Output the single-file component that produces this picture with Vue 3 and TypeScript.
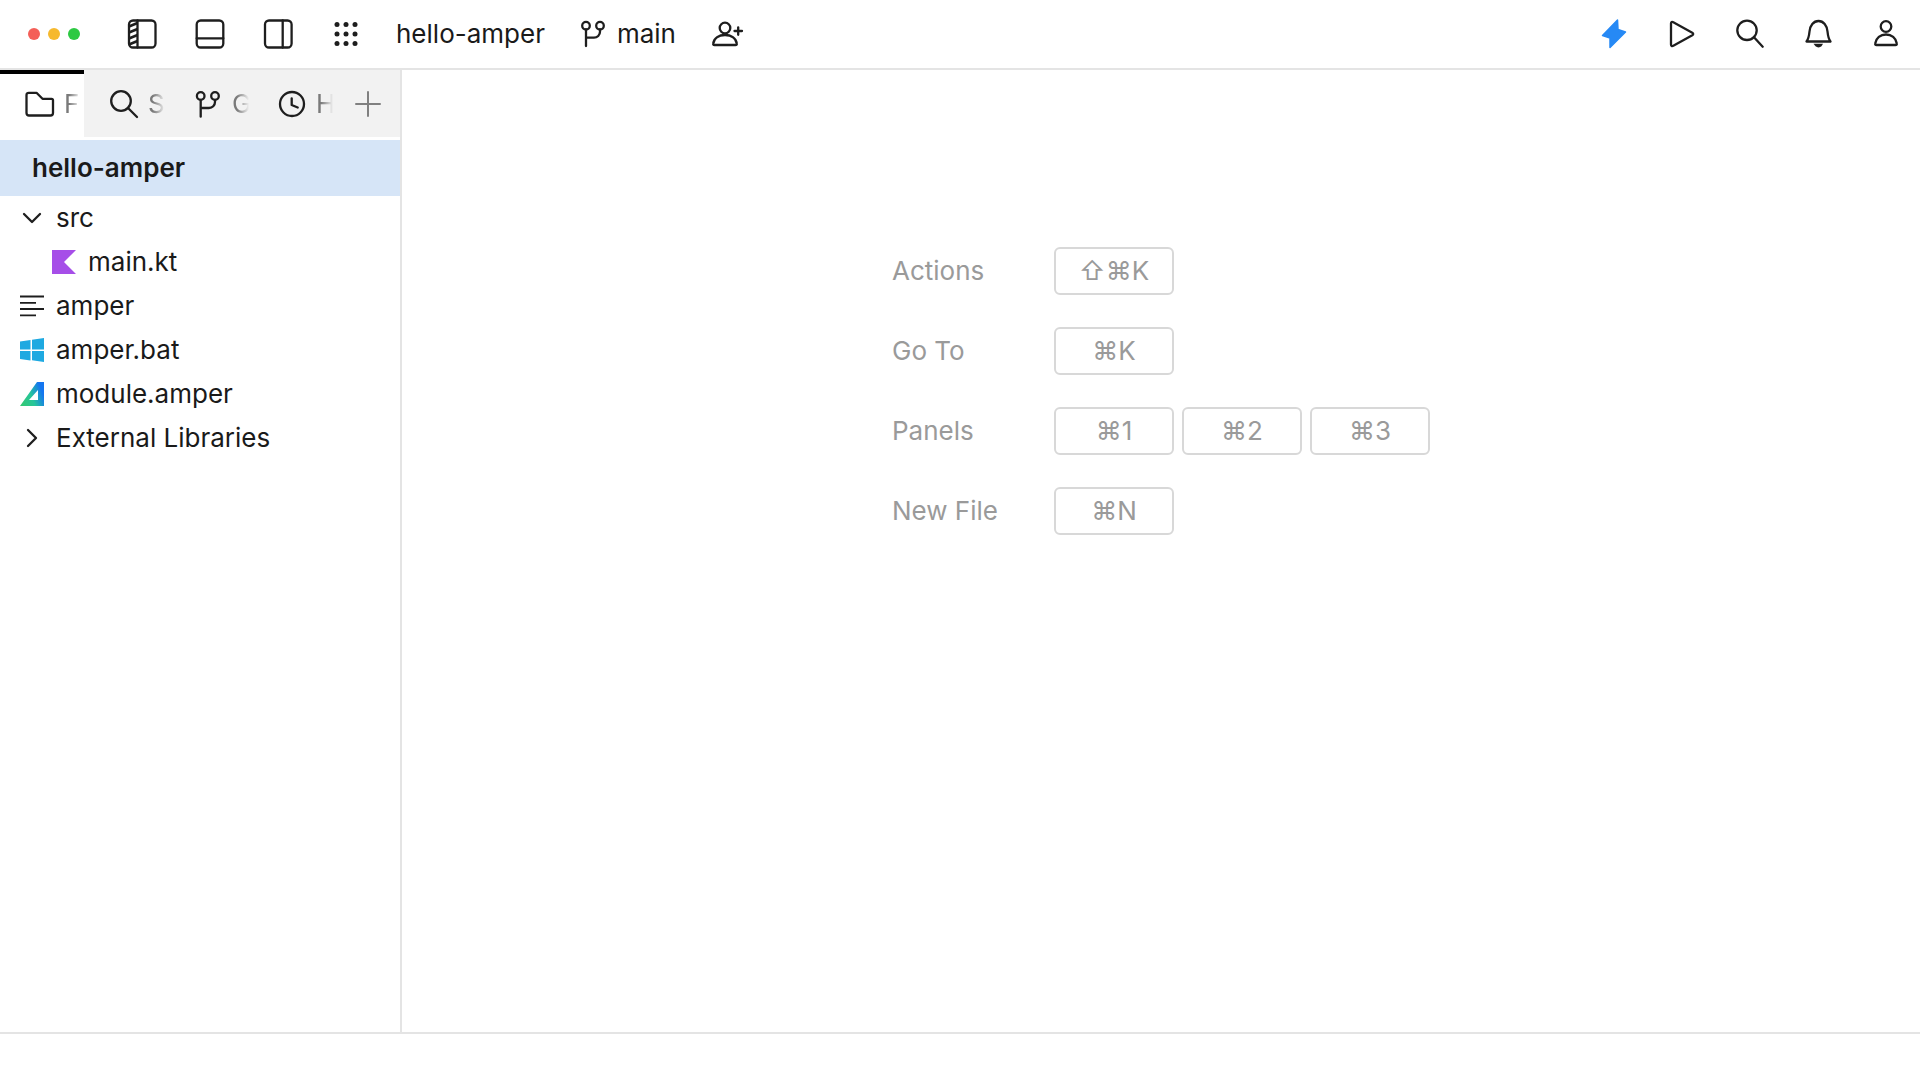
<script setup lang="ts">
const shortcuts: { label: string; keys: string[] }[] = [
  { label: 'Actions', keys: ['⇧⌘K'] },
  { label: 'Go To', keys: ['⌘K'] },
  { label: 'Panels', keys: ['⌘1', '⌘2', '⌘3'] },
  { label: 'New File', keys: ['⌘N'] },
]
</script>

<template>
  <div class="app">
    <header class="topbar">
      <div class="lights">
        <span class="light red"></span><span class="light yellow"></span><span class="light green"></span>
      </div>
      <div class="slot">
        <svg class="ic" viewBox="0 0 34 34"><rect x="4" y="3.500" width="26.500" height="27" rx="4"/><path d="M12.500 3.500v27"/><path class="hatch" d="M4 9.500l8.500-3.500M4 15.500l8.500-3.500M4 21.500l8.500-3.500M4 27.500l8.500-3.500"/></svg>
      </div>
      <div class="slot">
        <svg class="ic" viewBox="0 0 34 34"><rect x="3.700" y="3.500" width="26.600" height="27" rx="4"/><path d="M3.700 21.300h26.600"/></svg>
      </div>
      <div class="slot">
        <svg class="ic" viewBox="0 0 34 34"><rect x="4" y="3.500" width="26.600" height="27" rx="4"/><path d="M21.700 3.500v27"/></svg>
      </div>
      <div class="slot">
        <svg class="ic" viewBox="0 0 34 34"><g class="dots"><circle cx="8" cy="7.500" r="2.500"/><circle cx="17" cy="7.500" r="2.500"/><circle cx="26" cy="7.500" r="2.500"/><circle cx="8" cy="17" r="2.500"/><circle cx="17" cy="17" r="2.500"/><circle cx="26" cy="17" r="2.500"/><circle cx="8" cy="26.500" r="2.500"/><circle cx="17" cy="26.500" r="2.500"/><circle cx="26" cy="26.500" r="2.500"/></g></svg>
      </div>
      <span class="project">hello-amper</span>
      <svg class="ic branch" viewBox="0 0 34 34"><circle cx="10" cy="8.700" r="3.800"/><circle cx="24" cy="8.700" r="3.800"/><path d="M10 12.500V29M24 12.500v2.200a6 6 0 0 1-6 6h-8"/></svg>
      <span class="branch-name">main</span>
      <svg class="ic adduser" viewBox="0 0 34 34"><circle cx="15" cy="11" r="5.300"/><path d="M4.500 28c-1 0-1.500-.5-1.300-1.500C4 21 9 18 15 18s11 3 11.800 8.500c.2 1-.3 1.500-1.300 1.500zM24.500 14h7.500M28.200 10.300v7.500"/></svg>
      <div class="spacer"></div>
      <div class="slot">
        <svg class="ic" viewBox="0 0 34 34"><path class="bolt" d="M20.500 3 5.500 18.500l7.500 2.500v9.500L28.500 15l-7.500-2.500z"/></svg>
      </div>
      <div class="slot">
        <svg class="ic" viewBox="0 0 34 34"><path d="M6 6.500c0-1.500 1-2 2.300-1.300l19 10.500c1.200.7 1.200 1.900 0 2.600l-19 10.500C7 29.500 6 29 6 27.500z"/></svg>
      </div>
      <div class="slot">
        <svg class="ic" viewBox="0 0 34 34"><circle cx="14" cy="13.300" r="9.700"/><path d="m21 20.300 8.700 9.400"/></svg>
      </div>
      <div class="slot">
        <svg class="ic" viewBox="0 0 34 34"><path d="M5.500 24.500c2-2.500 2.500-5 3-10 .5-6 4-10.500 9-10.500s8.500 4.500 9 10.500c.5 5 1 7.500 3 10z"/><path class="bolt-dark" d="M12.500 26.800h9.500l-1.500 2.500c-1.500 1.500-4.500 1.500-6 0z"/></svg>
      </div>
      <div class="slot">
        <svg class="ic" viewBox="0 0 34 34"><circle cx="17" cy="9.500" r="5.300"/><path d="M7.500 28c-1 0-1.500-.5-1.300-1.500C7 21 11.500 17.500 17 17.500S27 21 27.800 26.500c.2 1-.3 1.500-1.300 1.500z"/></svg>
      </div>
    </header>

    <div class="body">
      <aside class="sidebar">
        <nav class="tabs">
          <div class="tab active">
            <svg class="ic tabic" viewBox="0 0 30 30"><path d="M1.500 6c0-1.500 1-2.200 2.200-2.200h7.800l6 6h9c1 0 1.500.5 1.500 1.500V24c0 1.500-1 2.500-2.500 2.500H4c-1.500 0-2.500-1-2.500-2.500z"/></svg>
            <span class="tablabel">Files</span>
          </div>
          <div class="tab">
            <svg class="ic tabic" viewBox="0 0 30 30"><circle cx="12" cy="12" r="9.800"/><path d="m19 19 9 9"/></svg>
            <span class="tablabel">Search</span>
          </div>
          <div class="tab">
            <svg class="ic tabic" viewBox="0 0 30 30"><circle cx="7.700" cy="7" r="3.800"/><circle cx="22" cy="7" r="3.800"/><path d="M7.700 10.800v16.900M22 10.800v2.200a6 6 0 0 1-6 6H7.700"/></svg>
            <span class="tablabel">Git</span>
          </div>
          <div class="tab">
            <svg class="ic tabic" viewBox="0 0 30 30"><circle cx="15" cy="15" r="12"/><path d="M14.700 9.300V16l6 2.500"/></svg>
            <span class="tablabel">History</span>
          </div>
          <div class="tab plus">
            <svg class="ic plusic" viewBox="0 0 26 26"><path d="M13 1v24M1 13h24"/></svg>
          </div>
        </nav>
        <div class="selected">hello-amper</div>
        <ul class="tree">
          <li class="row">
            <svg class="ic ric" viewBox="0 0 24 24"><path d="m4 8 8 8 8-8"/></svg>
            <span class="rowtext">src</span>
          </li>
          <li class="row nested">
            <svg class="ric" viewBox="0 0 24 24"><path class="kt" d="M0 0h24L12 12l12 12H0z"/></svg>
            <span class="rowtext">main.kt</span>
          </li>
          <li class="row">
            <svg class="ric" viewBox="0 0 24 24"><path class="lines" d="M0 2.500h24M0 8.800h16M0 15h24M0 21.300h16"/></svg>
            <span class="rowtext">amper</span>
          </li>
          <li class="row">
            <svg class="ric" viewBox="0 0 24 24"><path class="win" d="m0 3.500 10.500-1.500v9.500H0zM12 1.800 24 0v11.500H12zM0 13h10.500v9.500L0 21zM12 13h12v11l-12-1.700z"/></svg>
            <span class="rowtext">amper.bat</span>
          </li>
          <li class="row">
            <svg class="ric" viewBox="0 0 24 24">
              <defs>
                <linearGradient id="amp" x1="0" y1="1" x2="1" y2="0.600">
                  <stop offset="0" stop-color="#34c96e"/>
                  <stop offset="0.55" stop-color="#27c59a"/>
                  <stop offset="1" stop-color="#1476f0"/>
                </linearGradient>
              </defs>
              <path fill="url(#amp)" fill-rule="evenodd" d="M17 0h7v24H0zM18 8 9 18h9z"/>
            </svg>
            <span class="rowtext">module.amper</span>
          </li>
          <li class="row">
            <svg class="ic ric" viewBox="0 0 24 24"><path d="m8 4 8 8-8 8"/></svg>
            <span class="rowtext">External Libraries</span>
          </li>
        </ul>
      </aside>
      <main class="main">
        <div v-for="s in shortcuts" :key="s.label" class="shortcut">
          <span class="slabel">{{ s.label }}</span>
          <div class="keys">
            <kbd v-for="k in s.keys" :key="k" class="key">{{ k }}</kbd>
          </div>
        </div>
      </main>
    </div>
    <footer class="statusbar"></footer>
  </div>
</template>

<style scoped>
.app {
  width: 1920px;
  height: 1080px;
  display: flex;
  flex-direction: column;
  background: #fff;
  color: #1a1a1a;
  font-family: Inter, "DejaVu Sans", sans-serif;
  font-size: 26px;
  overflow: hidden;
}
.topbar {
  height: 70px;
  flex: none;
  box-sizing: border-box;
  border-bottom: 2px solid #e4e4e4;
  display: flex;
  align-items: center;
}
.lights {
  width: 108px;
  padding-left: 28px;
  box-sizing: border-box;
  display: flex;
  gap: 8px;
}
.light { width: 12px; height: 12px; border-radius: 50%; }
.red { background: #f45f58; }
.yellow { background: #f6b92e; }
.green { background: #2dc942; }
.slot {
  width: 68px;
  height: 68px;
  flex: none;
  display: flex;
  align-items: center;
  justify-content: center;
}
.ic {
  width: 34px;
  height: 34px;
  fill: none;
  stroke: #1e1e1e;
  stroke-width: 2.300;
  stroke-linecap: round;
  stroke-linejoin: round;
  flex: none;
}
.dots { fill: #1e1e1e; stroke: none; }
.hatch { stroke-width: 2.600; stroke-linecap: butt; }
.bolt { fill: #2689f5; stroke: #2689f5; stroke-width: 1.500; }
.bolt-dark { fill: #1e1e1e; stroke: none; }
.project { margin-left: 16px; line-height: 66px; }
.branch { margin-left: 31px; }
.branch-name { margin-left: 7px; line-height: 66px; }
.adduser { margin-left: 34px; }
.spacer { flex: 1; }
.body { flex: 1; display: flex; min-height: 0; }
.sidebar {
  width: 402px;
  flex: none;
  box-sizing: border-box;
  border-right: 2px solid #e4e4e4;
}
.tabs {
  height: 67px;
  display: flex;
  background: #f2f2f2;
}
.tab {
  width: 84px;
  box-sizing: border-box;
  padding-left: 25px;
  display: flex;
  align-items: center;
  gap: 9px;
  overflow: hidden;
}
.tab.active {
  background: #fff;
  border-top: 4px solid #000;
  padding-bottom: 4px;
}
.tabic { width: 30px; height: 30px; }
.tablabel {
  color: #7a7a7a;
  font-size: 26px;
  width: 17px;
  overflow: hidden;
  -webkit-mask-image: linear-gradient(to right, #000 30%, transparent 100%);
  mask-image: linear-gradient(to right, #000 30%, transparent 100%);
}
.tab.plus { width: 64px; padding-left: 19px; }
.plusic { width: 26px; height: 26px; stroke: #808080; stroke-width: 2; }
.selected {
  margin-top: 3px;
  height: 56px;
  box-sizing: border-box;
  padding: 0 0 2px 32px;
  display: flex;
  align-items: center;
  background: #d6e5f7;
  font-weight: 600;
}
.tree { list-style: none; margin: 0; padding: 0; }
.row {
  height: 44px;
  display: flex;
  align-items: center;
  gap: 12px;
  padding-left: 20px;
}
.rowtext { padding-bottom: 2px; }
.row.nested { padding-left: 52px; }
.ric { width: 24px; height: 24px; flex: none; }
.kt { fill: #a64ee8; }
.win { fill: #1ea9e1; }
.lines { fill: none; stroke: #1e1e1e; stroke-width: 1.800; }
.main {
  flex: 1;
  box-sizing: border-box;
  padding: 177px 0 0 490px;
  display: flex;
  flex-direction: column;
  gap: 32px;
}
.shortcut { display: flex; align-items: center; height: 48px; }
.slabel { width: 162px; color: #9a9a9a; padding-bottom: 2px; }
.keys { display: flex; gap: 8px; }
.key {
  width: 120px;
  height: 48px;
  box-sizing: border-box;
  border: 2px solid #d8d8d8;
  border-radius: 6px;
  padding-bottom: 2px;
  color: #9a9a9a;
  display: flex;
  align-items: center;
  justify-content: center;
  font-family: Inter, "DejaVu Sans", sans-serif;
  font-size: 26px;
}
.statusbar {
  height: 48px;
  flex: none;
  box-sizing: border-box;
  border-top: 2px solid #e4e4e4;
}
</style>
